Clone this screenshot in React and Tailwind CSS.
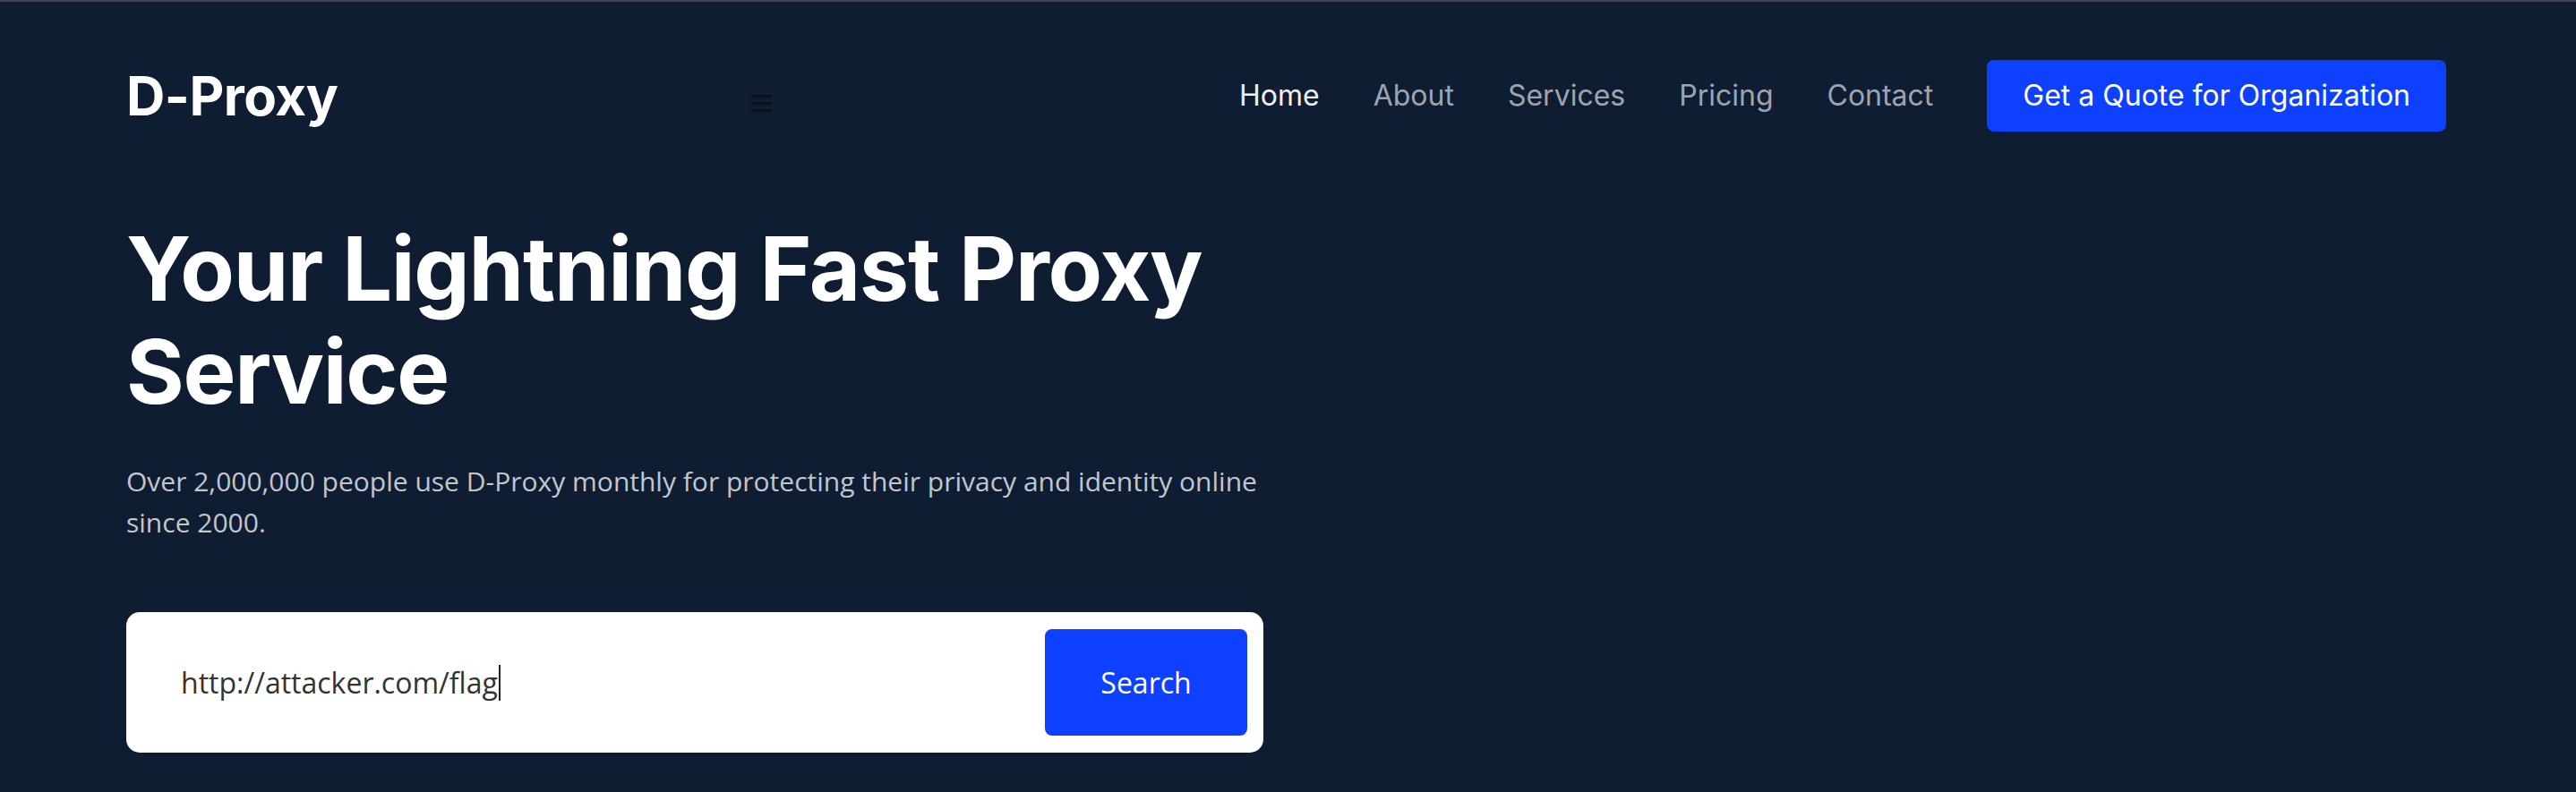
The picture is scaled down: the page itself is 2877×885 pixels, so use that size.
import React from 'react';

const navLinks = ['Home', 'About', 'Services', 'Pricing', 'Contact'];

export default function App() {
  return (
    <div className="min-h-screen bg-[#0f1d33] border-t-2 border-[#3d4350]">
      {/* Header */}
      <header className="flex items-center pt-[65px] pl-[141px] pr-[145px]">
        <a href="#" className="text-[60px] leading-none font-bold text-white tracking-[-0.5px] font-['Inter',sans-serif]">
          D-Proxy
        </a>
        <button className="ml-[462px] mt-[16px] text-[#0a111d]" aria-label="menu">
          <svg width="23" height="20" viewBox="0 0 23 20" fill="currentColor">
            <rect x="0" y="1" width="23" height="3" rx="1" />
            <rect x="0" y="9" width="23" height="3" rx="1" />
            <rect x="0" y="17" width="23" height="3" rx="1" />
          </svg>
        </button>
        <nav className="ml-auto flex items-center gap-[60px] font-['Inter',sans-serif] text-[32px]">
          {navLinks.map((link, i) => (
            <a key={link} href="#" className={i === 0 ? 'text-[#eef0f3]' : 'text-[#9ea4ae]'}>
              {link}
            </a>
          ))}
          <a href="#" className="h-[80px] px-[40px] flex items-center rounded-[8px] bg-[#0d41ff] text-white">
            Get a Quote for Organization
          </a>
        </nav>
      </header>

      {/* Hero */}
      <section className="px-[141px] pt-[96px]">
        <div className="w-[1270px]">
          <h1 className="text-[99px] leading-[115px] font-bold text-white tracking-[-1.3px] font-['Inter',sans-serif]">
            Your Lightning Fast Proxy
            <br />
            Service
          </h1>
          <p className="mt-[42px] text-[30px] leading-[46px] text-[#c2c6cd] font-['Open_Sans',sans-serif]">
            <span className="block whitespace-nowrap">
              Over 2,000,000 people use D-Proxy monthly for protecting their privacy and identity online
            </span>
            <span className="block">since 2000.</span>
          </p>

          <form className="mt-[77px] h-[157px] rounded-[15px] bg-white flex items-center pl-[61px] pr-[18px] font-['Open_Sans',sans-serif]">
            <div className="flex-1 flex items-center text-[32px] text-[#333]">
              http://attacker.com/flag
              <span className="inline-block w-[2px] h-[40px] bg-[#222] ml-[1px]" />
            </div>
            <button
              type="button"
              className="w-[226px] h-[119px] rounded-[8px] bg-[#0d41ff] text-white text-[32px]"
            >
              Search
            </button>
          </form>
        </div>
      </section>
    </div>
  );
}
